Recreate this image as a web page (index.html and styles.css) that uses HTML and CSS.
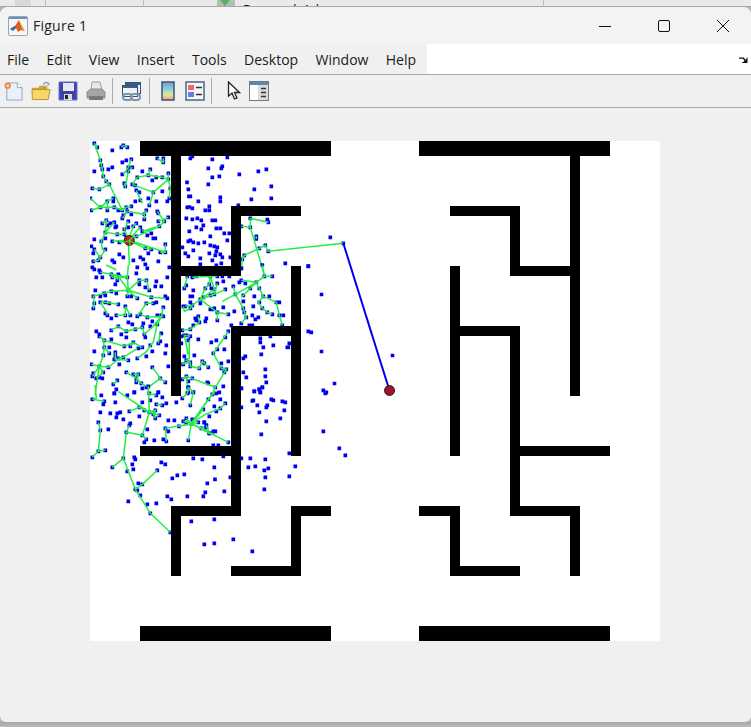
FILE: index.html
```html
<!DOCTYPE html>
<html lang="en">
<head>
    <meta charset="UTF-8">
    <title>Figure 1</title>
    <link rel="stylesheet" href="styles.css">
</head>
<body>
    <!-- window behind the figure, only its bottom edge shows -->
    <div class="behind">
        <span class="behind-sep sep-a"></span>
        <span class="behind-sep sep-b"></span>
        <span class="behind-sep sep-c"></span>
        <span class="behind-sep sep-d"></span>
        <svg class="behind-run" width="18" height="7" viewBox="0 0 18 7">
            <rect width="18" height="7" fill="#a9c4b4"/>
            <path d="M3 0L13 0L8 6z" fill="#5fae5f"/>
        </svg>
        <span class="behind-text">Run and Advance</span>
    </div>

    <div class="window">
        <div class="titlebar">
            <svg class="app-icon" width="20" height="20" viewBox="0 0 20 20">
                <rect x="0.5" y="0.5" width="19" height="19" rx="1" fill="#f4f6f8" stroke="#9aa5b1"/>
                <rect x="1" y="1" width="18" height="2" fill="#6d8fb3"/>
                <path d="M2 13L7 10L11 4L15 15L13 14L10 16L8 12z" fill="#d9601a"/>
                <path d="M2 13L7 10L8 12L5 15z" fill="#2a6fa8"/>
                <path d="M11 4L15 15L17 15z" fill="#f0a030"/>
            </svg>
            <span class="title">Figure 1</span>
            <div class="win-buttons">
                <svg width="14" height="14" viewBox="0 0 14 14"><path d="M1 7.5H13" class="win-line"/></svg>
                <svg width="14" height="14" viewBox="0 0 14 14"><rect x="1.5" y="1.5" width="11" height="11" rx="1.5" class="win-line"/></svg>
                <svg width="14" height="14" viewBox="0 0 14 14"><path d="M1 1L13 13M13 1L1 13" class="win-line"/></svg>
            </div>
        </div>

        <div class="menubar">
            <div class="menus">
                <span>File</span>
                <span>Edit</span>
                <span>View</span>
                <span>Insert</span>
                <span>Tools</span>
                <span>Desktop</span>
                <span>Window</span>
                <span>Help</span>
            </div>
            <div class="menu-rest">
                <svg width="12" height="9" viewBox="0 0 12 9"><path d="M1 2.5H6L7.5 5L9.5 2V8H3.5L6.5 6L5 3.8H1z" fill="#111"/></svg>
            </div>
        </div>

        <div class="toolbar">
            <svg class="tool" width="20" height="20" viewBox="0 0 21 21">
                <path d="M4 2H15L20 7V20H4z" fill="#e8f2fb" stroke="#8fa3bd"/>
                <path d="M15 2V7H20" fill="#fff" stroke="#8fa3bd"/>
                <circle cx="5" cy="5" r="3.4" fill="#ef8a5a"/>
                <circle cx="5" cy="5" r="1.4" fill="#ffe0b0"/>
            </svg>
            <svg class="tool" width="20" height="20" viewBox="0 0 21 21">
                <path d="M1 7H8L9 5H17V9H1z" fill="#c9a53a"/>
                <path d="M1.5 19.5L1 9H20L18 19.5z" fill="#f5d76a" stroke="#b8902a"/>
                <path d="M13 4C14 1 17 1 18.500 3" fill="none" stroke="#8ea6bd" stroke-width="1.500"/>
                <path d="M17 5L20 4L18 1z" fill="#8ea6bd"/>
            </svg>
            <svg class="tool" width="20" height="20" viewBox="0 0 20 20">
                <path d="M1 1H19V19H1z" fill="#3c44a8" stroke="#6b74c4"/>
                <rect x="5" y="2" width="11" height="8" fill="#e6e8f5"/>
                <rect x="6" y="13" width="8" height="6" fill="#d8d8de"/>
                <rect x="7" y="14" width="3" height="4" fill="#222"/>
            </svg>
            <svg class="tool" width="20" height="20" viewBox="0 0 20 20">
                <path d="M6 1H14L16 9H5z" fill="#e6e9ec" stroke="#9aa2aa"/>
                <path d="M1 11L5 8H16L19 11V17H1z" fill="#a3a6a8" stroke="#8a8d90"/>
                <rect x="3" y="15" width="14" height="4" fill="#77797b"/>
            </svg>
            <span class="tool-sep"></span>
            <svg class="tool" width="21" height="21" viewBox="0 0 21 21">
                <rect x="4.500" y="1.500" width="15" height="11" fill="#e9f0f8" stroke="#35506f"/>
                <rect x="4.500" y="1.500" width="15" height="2.500" fill="#3c5f8a"/>
                <rect x="1.500" y="4.500" width="15" height="11" fill="#eef3f8" stroke="#35506f"/>
                <rect x="1.500" y="4.500" width="15" height="2.500" fill="#3c5f8a"/>
                <rect x="2" y="13" width="9" height="6" rx="3" fill="none" stroke="#7f95ad" stroke-width="2"/>
                <rect x="10" y="13" width="9" height="6" rx="3" fill="none" stroke="#7f95ad" stroke-width="2"/>
            </svg>
            <span class="tool-sep"></span>
            <svg class="tool colorbar-icon" width="14" height="20" viewBox="0 0 14 20">
                <defs>
                    <linearGradient id="bar" x1="0" y1="0" x2="0" y2="1">
                        <stop offset="0" stop-color="#7a8fe0"/>
                        <stop offset="0.45" stop-color="#8fdccf"/>
                        <stop offset="0.7" stop-color="#e6e69a"/>
                        <stop offset="1" stop-color="#f09a80"/>
                    </linearGradient>
                </defs>
                <rect x="1" y="1" width="12" height="18" fill="url(#bar)" stroke="#3a5478" stroke-width="1.500"/>
            </svg>
            <svg class="tool" width="20" height="20" viewBox="0 0 20 20">
                <rect x="1" y="1" width="18" height="18" fill="#f5f7fa" stroke="#4a6388" stroke-width="1.500"/>
                <rect x="3" y="4" width="6" height="5" fill="#ee6a6a"/>
                <rect x="3" y="11" width="6" height="5" fill="#6a78e8"/>
                <path d="M11 6.500H17M11 13.500H17" stroke="#333" stroke-width="1.500"/>
            </svg>
            <span class="tool-sep"></span>
            <svg class="tool cursor-icon" width="14" height="20" viewBox="0 0 14 20">
                <path d="M1.500 1V15L5 12L7.500 18L10 17L7.500 11.500H12.500z" fill="#fff" stroke="#222" stroke-width="1.300"/>
            </svg>
            <svg class="tool" width="20" height="20" viewBox="0 0 20 20">
                <rect x="0.500" y="0.500" width="19" height="19" fill="#d9dcdf" stroke="#6f7b87"/>
                <rect x="1" y="1" width="18" height="3" fill="#5f87a8"/>
                <rect x="1" y="4" width="8" height="15" fill="#fff"/>
                <path d="M12 7.500H17M12 11.500H17M12 15.500H17" stroke="#333" stroke-width="1.500"/>
            </svg>
        </div>

        <div class="canvas">
            <svg class="plot" width="570" height="500" viewBox="90 141 570 500">
                <!-- sampled points, values read off the picture in 3x crops -->
                <g transform="translate(85 135) scale(.3333)">
                    <path class="dots" d="M28 25h0M37 37h0M82 46h0M109 37h0M115 31h0M127 37h0M46 76h0M112 82h0M124 76h0M139 73h0M217 70h0M235 70h0M235 82h0M49 91h0M28 109h0M52 103h0M70 103h0M82 97h0M55 124h0M130 97h0M142 97h0M130 109h0M112 118h0M172 109h0M196 103h0M190 121h0M157 127h0M232 127h0M250 115h0M214 127h0M202 136h0M250 133h0M64 139h0M73 148h0M118 145h0M121 154h0M142 148h0M151 151h0M22 160h0M43 163h0M154 166h0M205 172h0M232 169h0M256 160h0M253 190h0M163 172h0M166 196h0M151 199h0M190 190h0M214 199h0M247 199h0M193 211h0M16 190h0M46 217h0M19 226h0M67 199h0M85 190h0M85 199h0M67 226h0M88 217h0M100 226h0M124 217h0M139 214h0M112 226h0M127 229h0M115 241h0M112 250h0M139 238h0M184 226h0M178 238h0M217 229h0M220 235h0M178 253h0M250 247h0M238 259h0M220 259h0M64 256h0M52 265h0M67 271h0M76 265h0M88 262h0M130 259h0M94 274h0M91 277h0M130 277h0M154 265h0M145 274h0M118 283h0M166 277h0M172 289h0M223 274h0M61 292h0M97 298h0M118 298h0M187 301h0M199 295h0M154 304h0M205 310h0M211 310h0M28 313h0M61 310h0M124 307h0M49 319h0M82 319h0M103 322h0M19 334h0M241 328h0M181 340h0M199 343h0M61 343h0M28 343h0M226 352h0M241 352h0M190 355h0M103 358h0M115 367h0M25 355h0M46 367h0M40 376h0M25 379h0M145 376h0M166 367h0M175 373h0M82 376h0M88 382h0M220 379h0M181 388h0"/>
                    <path class="edges" d="M28 25L37 37M28 25L46 76L52 103L55 124L64 139L73 148L112 226M109 37L115 31L127 37M139 73L130 97L115 118M130 109L142 97M118 145L121 154L130 109M142 148L157 127L190 121L196 103M190 121L232 127L250 133M217 70L235 82L235 70M250 115L250 133L256 160L253 190M250 133L205 172L193 211M142 148L205 172M154 166L172 205M22 160L43 163L73 148M16 190L46 217L19 226M46 217L67 199L85 190M67 199L67 226M46 217L88 217L112 226L124 217L139 214M112 250L127 229L178 238L184 226M178 238L178 253M220 259L250 247M217 229L238 259L223 274L172 289M52 265L64 256L61 292L49 319L52 345M88 262L61 292L97 298L118 298M130 315L118 283L130 259M130 315L145 274L154 265M130 315L223 274M130 315L166 277M130 315L82 319M130 315L133 390M130 315L103 322M130 315L181 340L199 343M130 315L241 352M241 328L241 352L226 352M28 343L46 367L40 376L25 379M46 367L61 343"/>
                </g>
                <g transform="translate(170 135) scale(.3333)">
                    <path class="dots" d="M61 70h0M67 64h0M127 73h0M172 67h0M115 100h0M154 100h0M157 94h0M265 109h0M289 103h0M208 118h0M127 127h0M148 124h0M115 148h0M51 142h0M55 163h0M253 163h0M304 154h0M57 184h0M61 184h0M151 187h0M85 199h0M151 199h0M244 193h0M304 190h0M205 211h0M118 214h0M52 217h0M58 216h0M67 220h0M106 226h0M118 226h0M49 250h0M67 253h0M82 250h0M94 256h0M127 256h0M136 256h0M79 277h0M100 271h0M94 283h0M139 280h0M151 280h0M58 289h0M163 295h0M178 295h0M121 304h0M172 316h0M55 319h0M61 316h0M70 322h0M85 325h0M103 322h0M121 331h0M133 334h0M142 337h0M37 337h0M70 346h0M46 355h0M118 355h0M139 349h0M151 358h0M136 361h0M55 364h0M91 370h0M157 367h0M181 367h0M127 376h0M154 385h0M91 388h0M139 391h0M214 274h0M241 250h0M241 277h0M292 254h0M295 262h0M259 304h0M259 312h0M286 331h0M268 340h0M295 349h0M223 361h0M217 373h0M214 400h0M520 325h0M481 307h0M346 385h0M415 394h0"/>
                    <path class="edges" d="M241 250L295 262M241 250L241 277M214 274L241 277L283 420M259 304L259 312M214 400L217 373L223 361L268 340L286 331L295 349L520 325"/>
                </g>
                <g transform="translate(85 265) scale(.3333)">
                    <path class="dots" d="M22 7h0M28 13h0M43 16h0M46 22h0M34 37h0M52 37h0M79 28h0M82 37h0M100 28h0M103 34h0M127 37h0M157 7h0M187 10h0M154 25h0M247 37h0M253 7h0M97 46h0M91 58h0M163 46h0M184 46h0M214 49h0M163 58h0M181 67h0M193 76h0M211 64h0M229 64h0M31 76h0M25 94h0M46 94h0M46 112h0M28 115h0M25 130h0M61 91h0M79 79h0M58 85h0M94 85h0M127 94h0M139 94h0M130 76h0M157 100h0M199 97h0M241 94h0M247 100h0M214 112h0M61 112h0M73 115h0M100 118h0M121 124h0M184 115h0M205 115h0M235 127h0M61 145h0M67 151h0M79 160h0M94 151h0M121 151h0M136 151h0M157 154h0M166 148h0M187 157h0M202 169h0M217 151h0M229 151h0M235 154h0M130 172h0M142 178h0M175 175h0M217 178h0M172 187h0M196 184h0M100 184h0M79 196h0M34 199h0M43 208h0M124 199h0M109 208h0M151 193h0M178 208h0M181 217h0M229 205h0M79 223h0M124 217h0M43 214h0M58 226h0M226 229h0M145 232h0M196 241h0M220 235h0M244 241h0M172 247h0M136 244h0M118 244h0M160 250h0M58 247h0M73 247h0M28 259h0M91 262h0M73 265h0M55 271h0M91 271h0M202 259h0M241 265h0M184 274h0M157 280h0M115 277h0M100 280h0M130 286h0M103 298h0M88 283h0M19 298h0M43 304h0M70 307h0M55 322h0M250 304h0M202 307h0M124 322h0M145 328h0M160 328h0M154 340h0M25 325h0M22 334h0M43 337h0M52 340h0M226 340h0M241 352h0M154 352h0M169 355h0M97 346h0M85 358h0M34 340h0M184 367h0M148 382h0M220 382h0M88 385h0"/>
                    <path class="edges" d="M130 0L127 37L130 76L127 94M130 76L79 79L58 85L25 94L28 115L25 130M130 76L163 46L184 46L193 76M130 76L199 97L241 100M130 76L157 100M130 76L100 34L97 46M127 37L82 37L79 28M46 22L127 37M46 112L61 112L100 118M46 112L58 130L67 151M121 124L121 151L94 151M136 151L121 124M157 154L184 115L205 115M166 148L187 157L235 154M235 127L229 154L205 184L178 208L172 187L124 199L100 184L79 196M229 154L217 178L205 230L184 260L157 280M226 205L220 235M55 226L58 247L55 271L43 304L22 334M43 214L58 226L118 244L145 232L172 247M145 232L136 244M73 265L58 247M91 262L91 283L130 286M100 280L115 277L157 250M43 304L19 298M43 304L70 307L103 280M55 322L43 304L30 390M34 340L55 322M202 307L226 340L241 352M190 367L226 340M124 322L154 340L169 355L190 367L190 390M145 328L160 328L154 352M97 346L85 358M64 0L94 15"/>
                </g>
                <g transform="translate(175 265) scale(.3333)">
                    <path class="dots" d="M37 34h0M52 37h0M64 34h0M106 34h0M127 34h0M142 34h0M163 34h0M199 10h0M262 0h0M292 34h0M268 34h0M199 46h0M211 55h0M244 52h0M193 52h0M28 70h0M34 61h0M55 76h0M91 70h0M103 58h0M127 55h0M145 49h0M118 73h0M151 73h0M175 64h0M226 70h0M253 70h0M109 70h0M46 94h0M52 94h0M85 97h0M76 103h0M118 88h0M181 88h0M238 94h0M265 94h0M283 94h0M106 91h0M205 91h0M205 109h0M253 112h0M304 112h0M313 112h0M46 112h0M76 115h0M25 124h0M31 124h0M52 121h0M46 130h0M145 127h0M118 130h0M106 133h0M112 133h0M178 139h0M205 130h0M235 124h0M262 130h0M277 142h0M127 142h0M160 148h0M208 142h0M232 151h0M250 157h0M241 163h0M292 148h0M313 151h0M325 151h0M214 157h0M70 154h0M61 160h0M64 166h0M73 172h0M94 160h0M91 169h0M127 166h0M199 175h0M169 181h0M223 181h0M232 181h0M322 181h0M55 181h0M46 193h0M22 196h0M160 199h0M28 211h0M34 211h0M19 214h0M46 214h0M40 226h0M70 223h0M151 217h0M109 232h0M124 226h0M19 235h0M148 253h0M127 253h0M115 265h0M58 271h0M28 274h0M46 292h0M34 286h0M82 289h0M88 295h0M160 289h0M139 295h0M19 298h0M25 298h0M46 304h0M100 307h0M73 310h0M139 310h0M154 313h0M148 322h0M34 334h0M22 343h0M52 340h0M97 352h0M100 355h0M40 349h0M121 367h0M40 367h0M145 364h0M40 382h0M55 382h0M112 388h0M124 385h0M133 382h0M256 220h0M286 214h0M256 232h0M295 241h0M265 247h0M343 235h0M337 247h0M340 247h0M259 268h0M211 274h0M205 280h0M205 322h0M271 313h0M214 337h0M271 334h0M274 352h0M262 367h0M199 370h0M238 379h0M253 373h0M256 382h0M400 199h0M409 202h0M400 3h0"/>
                    <path class="edges" d="M37 34L28 70M52 37L106 34L127 34M106 34L103 58L91 70L76 103L52 121L31 124M106 34L118 73L85 97M76 103L118 88L151 73M76 103L127 142M118 88L127 55M181 88L175 64M181 88L142 109M181 88L205 130L214 157L199 175M181 88L244 52L199 46M244 52L268 34L292 34M244 52L265 94L250 112L262 130L277 142L292 148M265 94L304 112L313 151L322 181M268 34L262 0M226 70L244 52M226 70L199 97M127 142L127 166M127 142L160 148M25 124L28 139L46 130L52 121M70 154L73 172L46 193L22 196M46 214L28 211L40 270M160 199L115 265L139 310L154 313L121 367L34 334L40 382M46 292L34 286L43 280L43 226M19 298L46 292L46 304L73 310L82 289L100 307M121 367L112 388M34 334L22 343"/>
                </g>
                <g transform="translate(85 385) scale(.3333)">
                    <path class="dots" d="M22 43h0M49 31h0M58 49h0M55 58h0M94 13h0M88 25h0M127 31h0M148 22h0M172 10h0M91 52h0M172 52h0M190 4h0M193 25h0M196 46h0M214 31h0M220 22h0M232 37h0M244 55h0M274 52h0M310 7h0M325 22h0M307 25h0M292 40h0M316 61h0M370 43h0M214 58h0M232 61h0M355 73h0M388 64h0M163 67h0M178 76h0M193 82h0M211 76h0M46 82h0M76 85h0M94 97h0M97 85h0M106 82h0M133 79h0M163 94h0M205 88h0M211 100h0M223 91h0M115 103h0M250 106h0M268 106h0M304 100h0M295 109h0M322 103h0M340 112h0M304 115h0M358 112h0M373 94h0M40 112h0M136 115h0M133 121h0M241 130h0M250 139h0M282 124h0M364 121h0M364 127h0M349 130h0M319 116h0M46 136h0M70 133h0M187 133h0M124 142h0M172 151h0M385 139h0M373 145h0M184 163h0M178 172h0M208 166h0M235 163h0M244 169h0M310 166h0M385 181h0M61 196h0M40 199h0M22 217h0M115 220h0M82 247h0M148 217h0M151 223h0M325 220h0M352 223h0M142 238h0M229 232h0M241 238h0M127 259h0M145 253h0M217 256h0M388 247h0M262 280h0M277 271h0M298 268h0M390 283h0M160 295h0M172 298h0M367 295h0M151 313h0M157 316h0M166 331h0M361 322h0M247 334h0M307 334h0M355 334h0M259 343h0M130 349h0M187 358h0M214 355h0M196 385h0M319 409h0M388 403h0M256 442h0M358 478h0M388 475h0"/>
                    <path class="edges" d="M22 43L58 49M30 0L34 40L25 43M100 20L193 82M133 79L163 67L193 82M190 4L193 82L172 151L184 163M124 142L172 151M193 82L223 91M193 82L211 76L205 88L211 100M193 82L178 76M190 25L214 31M214 58L232 61M40 112L46 136L40 199L61 196M40 199L22 217M133 121L124 142L115 220L82 247M115 220L151 313L172 298L217 256M151 313L196 385L256 442M319 116L370 43L388 20M319 116L355 73M319 116L310 166M319 116L241 130L244 169M319 116L390 150M319 116L304 100M319 116L282 124M319 116L340 112M319 116L349 130L364 121M310 7L325 22L316 61M310 7L307 25L292 40M319 116L295 109"/>
                </g>
                <g transform="translate(180 385) scale(.3333)">
                    <path class="dots" d="M184 10h0M223 19h0M238 13h0M247 7h0M241 22h0M220 46h0M217 48h0M274 43h0M280 46h0M307 49h0M316 52h0M232 61h0M262 61h0M259 67h0M184 67h0M313 76h0M238 82h0M301 100h0M259 109h0M244 148h0M430 16h0M439 22h0M436 25h0M430 139h0M478 190h0M496 211h0M328 205h0M184 220h0M211 220h0M256 223h0M346 244h0M205 247h0M226 244h0M265 250h0M253 256h0M328 274h0M256 277h0M253 313h0M130 214h0M151 277h0M133 319h0M160 463h0M217 499h0M121 43h0M136 55h0M121 70h0M109 79h0M145 172h0M115 181h0M106 139h0M88 145h0M73 112h0M79 121h0M79 127h0"/>
                    <path class="edges" d="M33 115L145 172M33 115L85 44L106 18M33 115L76 88L121 70L136 55M33 115L88 145L79 121"/>
                </g>
                <path class="dots-screen" d="M321.500 294.500h0M321.500 351.500h0M392.500 355.500h0M334.500 383.500h0"/>

                <!-- walls, painted over the samples -->
                <path class="walls" d="M140 141H331V156H140zM419 141H610V156H419zM140 626H331V641H140zM419 626H610V641H419zM171 156H181V396H171zM231 206H301V216H231zM231 216H241V276H231zM171 266H241V276H171zM291 266H301V456H291zM231 326H291V336H231zM231 336H241V516H231zM140 446H231V456H140zM171 506H231V516H171zM171 516H181V576H171zM291 506H331V516H291zM291 516H301V576H291zM231 566H291V576H231zM570 156H580V396H570zM450 206H520V216H450zM510 216H520V276H510zM520 266H570V276H520zM450 266H460V456H450zM460 326H520V336H460zM510 336H520V516H510zM520 446H610V456H520zM520 506H580V516H520zM570 516H580V576H570zM419 506H460V516H419zM450 516H460V576H450zM460 566H520V576H460z"/>

                <path class="path-line" d="M343.300 243.300L389.500 390.500"/>
                <circle class="node node-start" cx="129.300" cy="240.500" r="5"/>
                <path class="start-edges" d="M129.300 240.500L122 243M129.300 240.500L136 244M129.300 240.500L130 246M129.300 240.500L134 236"/>
                <circle class="node" cx="389.500" cy="390.500" r="5"/>
            </svg>
        </div>
    </div>
    <div class="shadow"></div>
</body>
</html>
```

FILE: styles.css
```css
html, body {
    margin: 0;
    height: 100%;
    overflow: hidden;
}
body {
    font-family: "Open Sans", "Liberation Sans", sans-serif;
    background-color: #b4b4b4;
    color: #1a1a1a;
}

/* window behind */
.behind {
    position: relative;
    height: 6px;
    background-color: #eaeaea;
    border-bottom: 1px solid #a8a8a8;
    overflow: hidden;
}
.behind-sep {
    position: absolute;
    top: 0;
    width: 1px;
    height: 7px;
    background-color: #bdbdbd;
}
.sep-a { left: 45px; }
.sep-b { left: 143px; }
.sep-c { left: 543px; }
.sep-d { left: 15px; width: 16px; background-color: #d9d9d9; }
.behind-run {
    position: absolute;
    left: 217px;
    top: 0;
}
.behind-text {
    position: absolute;
    left: 243px;
    top: 1px;
    font-size: 13px;
    line-height: 16px;
    word-spacing: 3px;
}

/* figure window */
.window {
    height: 715px;
    background-color: #f0f0f0;
    border-radius: 8px 8px 6px 6px;
    overflow: hidden;
}
.shadow {
    height: 5px;
    background: linear-gradient(#a6a6a6, #bcbcbc);
}
.titlebar {
    display: flex;
    align-items: center;
    height: 37px;
    padding-left: 8px;
    background-color: #f3f3f3;
}
.app-icon {
    margin-right: 5px;
}
.title {
    font-size: 14px;
    letter-spacing: 0.25px;
    color: #222;
}
.win-buttons {
    display: flex;
    gap: 45px;
    margin-left: auto;
    margin-right: 21px;
}
.win-line {
    fill: none;
    stroke: #111;
    stroke-width: 1;
}
.menubar {
    display: flex;
    height: 30px;
    background-color: #fff;
    border-bottom: 1px solid #a9a9a9;
}
.menus {
    display: flex;
    align-items: center;
    gap: 17.4px;
    width: 420px;
    padding-left: 7px;
    background-color: #f0f0f0;
    font-size: 14px;
}
.menu-rest {
    flex: 1;
    display: flex;
    justify-content: flex-end;
    align-items: center;
    padding-right: 1px;
}
.toolbar {
    display: flex;
    align-items: center;
    height: 32px;
    padding-left: 3px;
    background-color: #f0f0f0;
    border-bottom: 1px solid #a9a9a9;
}
.tool {
    margin-right: 7.5px;
}
.tool-sep {
    width: 1px;
    height: 26px;
    margin-left: -1px;
    margin-right: 8px;
    background-color: #a9a9a9;
}
.colorbar-icon {
    margin-left: 3px;
    margin-right: 10px;
}
.cursor-icon {
    margin-left: 7px;
    margin-right: 8px;
}
.canvas {
    padding: 33px 0 0 90px;
}
.plot {
    display: block;
    background-color: #fff;
}

/* maze plot */
.dots {
    fill: none;
    stroke: #0000f0;
    stroke-width: 11px;
    stroke-linecap: square;
}
.dots-screen {
    fill: none;
    stroke: #0000f0;
    stroke-width: 3.6px;
    stroke-linecap: square;
}
.edges {
    fill: none;
    stroke: #20f040;
    stroke-width: 4.5px;
}
.walls {
    fill: #000;
}
.path-line {
    fill: none;
    stroke: #0000f0;
    stroke-width: 2px;
}
.node {
    fill: #a3102e;
    stroke: #222;
    stroke-width: 1px;
}
.node-start {
    fill: #c81818;
}
.start-edges {
    fill: none;
    stroke: #20f040;
    stroke-width: 1.2px;
}
```
